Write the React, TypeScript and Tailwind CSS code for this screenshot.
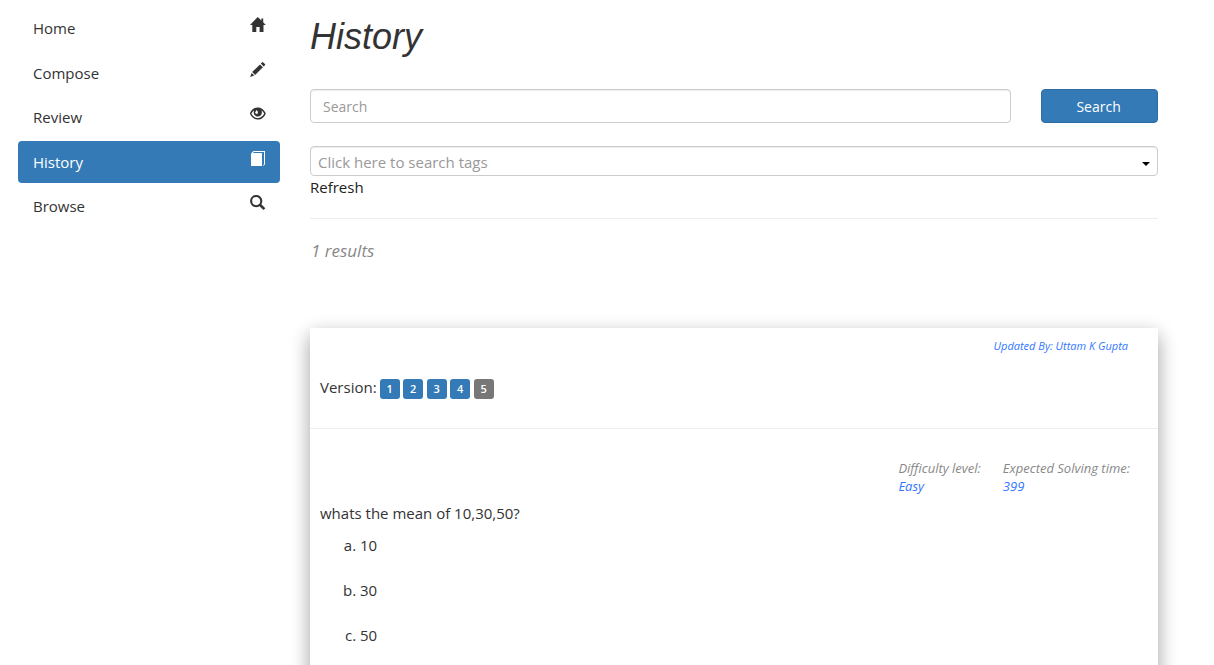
import React from "react";

function HomeIcon() {
  return (
    <svg width="16" height="16" viewBox="0 0 16 16" fill="currentColor" aria-hidden="true">
      <path d="M7.8 0 L11.4 3.5 V1.4 H13.2 V5.3 L15.8 7.9 H13.5 V15 H9.6 V10 H6.3 V15 H2.3 V7.9 H0 Z" />
    </svg>
  );
}

function PencilIcon() {
  return (
    <svg width="16" height="16" viewBox="0 0 16 16" fill="currentColor" aria-hidden="true">
      <path d="M11.9 0.4 Q12.6 -0.3 13.3 0.4 L14.9 2 Q15.5 2.7 14.9 3.3 L13.7 4.5 L10.8 1.6 Z" />
      <path d="M10 2.4 L12.9 5.3 L5.1 13 L2.2 10.1 Z" />
      <path d="M1.6 10.9 L4.3 13.6 L0.1 15.1 Z" />
    </svg>
  );
}

function EyeIcon() {
  return (
    <svg width="16" height="16" viewBox="0 0 16 16" fill="currentColor" aria-hidden="true">
      <path
        fillRule="evenodd"
        d="M7.8 1.4 C11.6 1.4 14.4 4.1 15.8 7.4 C14.4 10.8 11.6 13.6 7.8 13.6 C4 13.6 1.2 10.8 -0.2 7.4 C1.2 4.1 4 1.4 7.8 1.4 Z M4.2 4.2 C3 5.1 2.1 6.1 1.4 7.4 C2.8 10.2 5.1 12 7.8 12 C10.5 12 12.8 10.2 14.2 7.4 C13.5 6.1 12.6 5 11.3 4.2 C11.7 4.9 11.9 5.7 11.9 6.5 C11.9 8.8 10 10.6 7.8 10.6 C5.6 10.6 3.7 8.8 3.7 6.5 C3.7 5.7 3.9 4.9 4.2 4.2 Z M6.4 4 L5 6.9 L7.2 8.2 L8.1 6 Z"
      />
    </svg>
  );
}

function BookIcon() {
  return (
    <svg width="16" height="16" viewBox="0 0 16 16" fill="currentColor" aria-hidden="true">
      <path d="M1 2.6 L2.4 2 H11.6 Q12 2 12 2.5 V15 H1.6 Q1 15 1 14.4 Z" />
      <path d="M1 2.4 L3.4 0 H15 V13.4 L13.2 15 V14 L14 13.3 V1 H3.9 L2.9 2 Z" />
    </svg>
  );
}

function SearchIcon() {
  return (
    <svg width="16" height="16" viewBox="0 0 16 16" fill="none" stroke="currentColor" aria-hidden="true">
      <circle cx="6.2" cy="6.1" r="5.1" strokeWidth="2.1" />
      <path d="M9.9 9.8 L14.4 14.1" strokeWidth="2.6" />
    </svg>
  );
}

const links = [
  { label: "Home", Icon: HomeIcon },
  { label: "Compose", Icon: PencilIcon },
  { label: "Review", Icon: EyeIcon },
  { label: "History", Icon: BookIcon, active: true },
  { label: "Browse", Icon: SearchIcon },
];

const versions = [1, 2, 3, 4, 5];
const currentVersion = 5;
const options = ["10", "30", "50"];

export default function App() {
  return (
    <div className="flex min-h-screen gap-[30px] overflow-hidden bg-white pr-14 pl-[18px] font-['Open_Sans',sans-serif] text-[15px] leading-[21px] text-[#333]">
      <nav className="w-[262px] shrink-0 pt-[7px]">
        <ul className="flex h-[220px] flex-col justify-between">
          {links.map(({ label, Icon, active }) => (
            <li key={label}>
              <a
                href="#"
                aria-current={active ? "page" : undefined}
                className={
                  active
                    ? "flex h-[42px] items-start justify-between rounded bg-[#337ab7] pt-[10px] pr-[14px] pl-[15px] leading-[23px] text-white"
                    : "flex h-[42px] items-start justify-between rounded pt-[10px] pr-[14px] pl-[15px] leading-[23px]"
                }
              >
                <span>{label}</span>
                <Icon />
              </a>
            </li>
          ))}
        </ul>
      </nav>

      <main className="min-w-0 flex-1 pt-[17px]">
        <h1 className="font-['Liberation_Sans',sans-serif] text-4xl leading-[40px] italic">History</h1>

        <form className="mt-8 grid grid-cols-[6fr_1fr] gap-[30px]" onSubmit={(e) => e.preventDefault()}>
          <input
            type="text"
            aria-label="Search"
            placeholder="Search"
            className="h-[34px] min-w-0 rounded border border-[#ccc] bg-white px-3 text-sm shadow-[inset_0_1px_1px_rgba(0,0,0,0.075)] placeholder:text-[#999]"
          />
          <button
            type="submit"
            className="h-[34px] rounded border border-[#2e6da4] bg-[#337ab7] pt-px pr-[2px] text-sm text-white"
          >
            Search
          </button>
        </form>

        <div className="relative mt-[23px]">
          <select
            aria-label="Tags"
            defaultValue=""
            className="block h-[30px] w-full appearance-none rounded border border-[#ccc] bg-white px-[7px] pt-[2px] text-[15px] text-[#999] shadow-[inset_0_1px_1px_rgba(0,0,0,0.075)]"
          >
            <option value="">Click here to search tags</option>
          </select>
          <span className="pointer-events-none absolute top-4 right-2 border-x-4 border-t-4 border-x-transparent border-t-black" />
        </div>
        <button type="button" className="mt-px block text-[#222]">
          Refresh
        </button>

        <hr className="mt-5 border-[#eee]" />
        <p className="mt-5 pl-px text-[17px] leading-6 text-[#888] italic">1 results</p>

        <article className="mt-[65px] bg-white pb-16 shadow-[0_8px_17px_0_rgba(0,0,0,0.2),0_6px_20px_0_rgba(0,0,0,0.19)]">
          <header className="border-b border-[#eee] px-[10px] pt-[10px] pb-[29px]">
            <p className="pr-5 text-right text-[11px] leading-4 text-[#3377ff] italic">Updated By: Uttam K Gupta</p>
            <div className="mt-[23px] flex items-start gap-[3px]">
              <span>Version:</span>
              <div className="flex w-[114px] justify-between pt-[2px]">
                {versions.map((version) => (
                  <button
                    key={version}
                    type="button"
                    className={
                      version === currentVersion
                        ? "h-5 w-5 rounded-[3px] bg-[#777] text-[11px] leading-5 font-semibold text-white"
                        : "h-5 w-5 rounded-[3px] bg-[#337ab7] text-[11px] leading-5 font-semibold text-white"
                    }
                  >
                    {version}
                  </button>
                ))}
              </div>
            </div>
          </header>

          <section className="px-[10px] pt-[30px]">
            <dl className="flex justify-end gap-[22px] pr-[18px] text-[13px] leading-[18px] text-[#888] italic">
              <div>
                <dt>Difficulty level:</dt>
                <dd className="text-[#3377ff]">Easy</dd>
              </div>
              <div>
                <dt>Expected Solving time:</dt>
                <dd className="text-[#3377ff]">399</dd>
              </div>
            </dl>
            <p className="mt-2">whats the mean of 10,30,50?</p>
            <ol className="mt-[11px] flex list-[lower-alpha] flex-col gap-6 pl-10">
              {options.map((option) => (
                <li key={option}>{option}</li>
              ))}
            </ol>
          </section>
        </article>
      </main>
    </div>
  );
}
